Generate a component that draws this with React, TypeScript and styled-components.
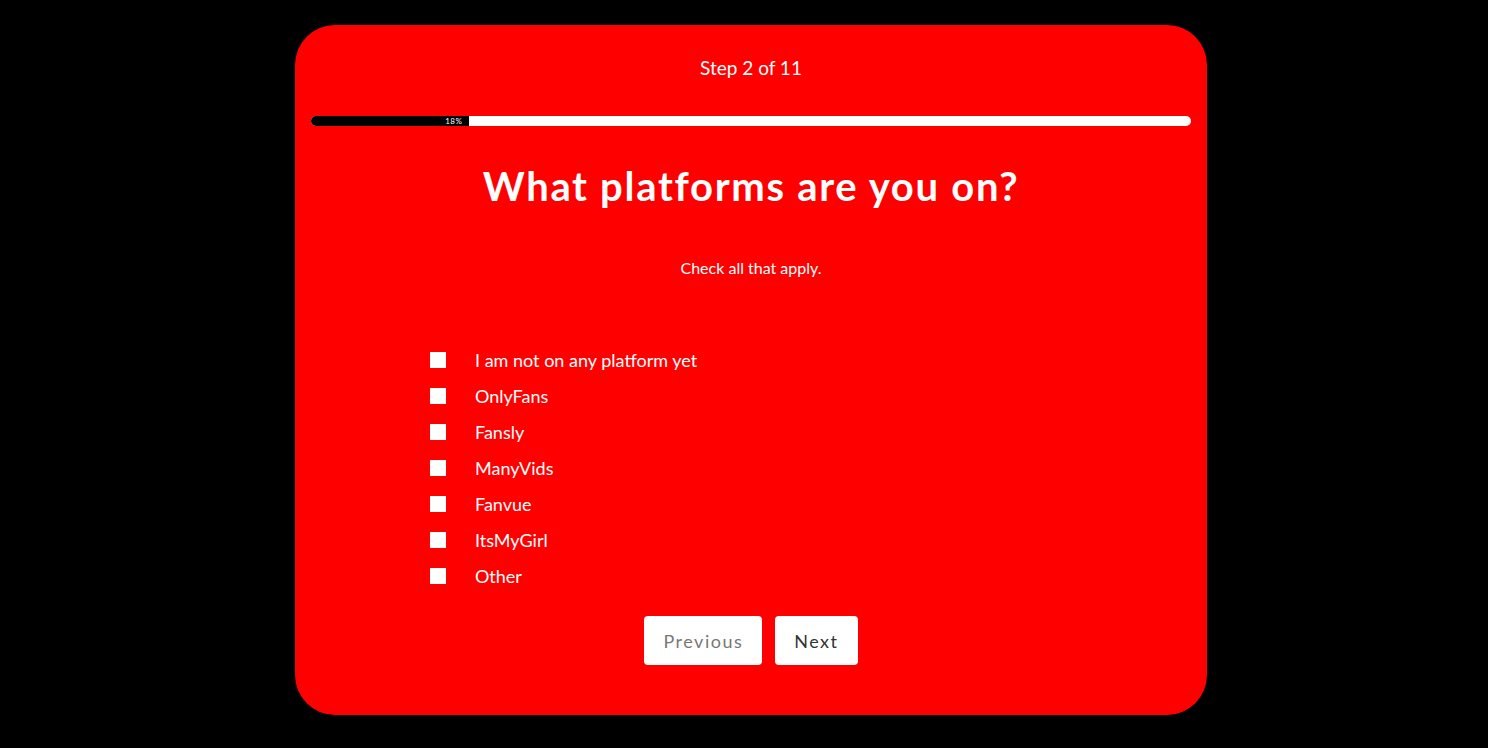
import React, { useState } from "react";
import styled, { createGlobalStyle } from "styled-components";

const GlobalStyle = createGlobalStyle`
  html, body {
    margin: 0;
    padding: 0;
    background: #000;
  }
  body {
    font-family: "Lato", "Liberation Sans", sans-serif;
  }
`;

const options = [
  "I am not on any platform yet",
  "OnlyFans",
  "Fansly",
  "ManyVids",
  "Fanvue",
  "ItsMyGirl",
  "Other",
];

const App = () => {
  const [checked, setChecked] = useState<string[]>([]);
  const progress = 18;

  const toggle = (name: string) => {
    setChecked((prev) =>
      prev.includes(name) ? prev.filter((n) => n !== name) : [...prev, name]
    );
  };

  return (
    <>
      <GlobalStyle />
      <Page>
        <Card>
          <StepText>Step 2 of 11</StepText>
          <ProgressTrack>
            <ProgressFill style={{ width: `${progress}%` }}>
              <ProgressLabel>{progress}%</ProgressLabel>
            </ProgressFill>
          </ProgressTrack>
          <Title>What platforms are you on?</Title>
          <Subtitle>Check all that apply.</Subtitle>
          <OptionList>
            {options.map((opt) => (
              <OptionRow key={opt}>
                <Box
                  type="checkbox"
                  checked={checked.includes(opt)}
                  onChange={() => toggle(opt)}
                />
                <OptionText>{opt}</OptionText>
              </OptionRow>
            ))}
          </OptionList>
          <Buttons>
            <NavButton $muted>Previous</NavButton>
            <NavButton>Next</NavButton>
          </Buttons>
        </Card>
      </Page>
    </>
  );
};

export default App;

const Page = styled.div`
  width: 1488px;
  height: 748px;
  display: flex;
  justify-content: center;
  padding: 25px 0 0 14px;
  box-sizing: border-box;
`;

const Card = styled.div`
  width: 912px;
  height: 690px;
  background: #ff0000;
  border-radius: 40px;
  box-sizing: border-box;
  padding: 0 16px;
  display: flex;
  flex-direction: column;
  align-items: center;
  color: #fff;
`;

const StepText = styled.div`
  margin-top: 31px;
  font-size: 19px;
  line-height: 24px;
`;

const ProgressTrack = styled.div`
  margin-top: 36px;
  width: 100%;
  height: 10px;
  background: #fff;
  border-radius: 5px;
  overflow: hidden;
`;

const ProgressFill = styled.div`
  height: 100%;
  background: #000;
  display: flex;
  justify-content: flex-end;
  align-items: center;
  padding-right: 7px;
  box-sizing: border-box;
`;

const ProgressLabel = styled.span`
  font-size: 8px;
  line-height: 10px;
  color: #fff;
  letter-spacing: 0.5px;
`;

const Title = styled.h1`
  margin: 35px 0 0;
  font-size: 40px;
  line-height: 50px;
  font-weight: 700;
  letter-spacing: 1.7px;
`;

const Subtitle = styled.p`
  margin: 47px 0 0;
  font-size: 16px;
  line-height: 20px;
`;

const OptionList = styled.div`
  margin-top: 70px;
  width: 642px;
  display: flex;
  flex-direction: column;
  gap: 12px;
`;

const OptionRow = styled.label`
  display: flex;
  align-items: center;
  height: 24px;
  cursor: pointer;
`;

const Box = styled.input`
  appearance: none;
  margin: 0;
  width: 16px;
  height: 16px;
  background: #fff;
  border: none;
  cursor: pointer;

  &:checked {
    background: #000;
  }
`;

const OptionText = styled.span`
  margin-left: 29px;
  font-size: 18px;
  line-height: 24px;
`;

const Buttons = styled.div`
  margin-top: 28px;
  display: flex;
  gap: 13px;
`;

const NavButton = styled.button<{ $muted?: boolean }>`
  height: 49px;
  padding: 0 19px;
  border: none;
  border-radius: 4px;
  background: #fff;
  color: ${(p) => (p.$muted ? "#777" : "#333")};
  font-family: "Lato", "Liberation Sans", sans-serif;
  font-size: 18px;
  letter-spacing: 1.5px;
  cursor: pointer;
`;
